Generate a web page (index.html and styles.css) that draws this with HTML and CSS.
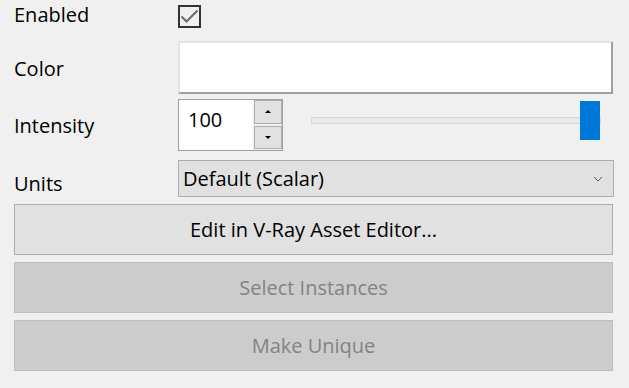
FILE: index.html
```html
<!DOCTYPE html>
<html lang="en">

<head>
  <meta charset="UTF-8">
  <title>Light Properties</title>
  <link rel="stylesheet" href="styles.css">
</head>

<body>
  <div class="panel">
    <div class="row row-enabled">
      <span class="label label-enabled">Enabled</span>
      <span class="checkbox">
        <svg width="19" height="19" viewBox="0 0 19 19">
          <polyline points="1.5,9.5 6.5,14.5 17.5,3.5" fill="none" stroke="#6e6e6e" stroke-width="2.2" />
        </svg>
      </span>
    </div>

    <div class="row row-color">
      <span class="label label-color">Color</span>
      <div class="swatch"></div>
    </div>

    <div class="row row-intensity">
      <span class="label label-intensity">Intensity</span>
      <div class="spinbox">
        <div class="spin-value">100</div>
        <div class="spin-buttons">
          <div class="spin-btn spin-up"><span class="arrow-up"></span></div>
          <div class="spin-btn spin-down"><span class="arrow-down"></span></div>
        </div>
      </div>
      <div class="slider">
        <div class="groove"></div>
        <div class="handle"></div>
      </div>
    </div>

    <div class="row row-units">
      <span class="label label-units">Units</span>
      <div class="combo">
        <span>Default (Scalar)</span>
        <svg width="10" height="6" viewBox="0 0 10 6">
          <polyline points="1,1 5,5 9,1" fill="none" stroke="#555" stroke-width="1" />
        </svg>
      </div>
    </div>

    <button class="btn">Edit in V-Ray Asset Editor...</button>
    <button class="btn" disabled>Select Instances</button>
    <button class="btn" disabled>Make Unique</button>
  </div>
</body>

</html>
```

FILE: styles.css
```css
body {
  margin: 0;
  background: #f0f0f0;
  color: #000;
  font-family: "Open Sans", "Noto Sans", sans-serif;
  font-size: 20px;
}

.panel {
  display: flex;
  flex-direction: column;
  padding: 5px 16px 0 14px;
}

.row {
  display: flex;
  align-items: center;
}

.label {
  width: 164px;
  flex: none;
  line-height: 24px;
}

.row-enabled {
  height: 23px;
}

.label-enabled {
  margin-top: -3px;
}

.row-color {
  height: 53px;
  margin-top: 13px;
}

.label-color {
  margin-top: 3px;
}

.row-intensity {
  height: 52px;
  margin-top: 5px;
  align-items: flex-start;
}

.label-intensity {
  margin-top: 15px;
}

.row-units {
  height: 37px;
  margin-top: 9px;
}

.label-units {
  margin-top: 10px;
}

.checkbox {
  width: 23px;
  height: 23px;
  box-sizing: border-box;
  border: 2px solid #333;
  display: flex;
}

.swatch {
  flex: 1;
  height: 53px;
  box-sizing: border-box;
  background: #fff;
  border-top: 2px solid #e3e3e3;
  border-left: 2px solid #e3e3e3;
  border-right: 2px solid #a0a0a0;
  border-bottom: 2px solid #a0a0a0;
}

.spinbox {
  display: flex;
  width: 105px;
  height: 52px;
  box-sizing: border-box;
  border: 1px solid #a0a0a0;
  background: #f0f0f0;
}

.spin-value {
  width: 74px;
  background: #fff;
  padding: 7px 0 0 9px;
  box-sizing: border-box;
  line-height: 26px;
}

.spin-buttons {
  display: flex;
  flex-direction: column;
  gap: 2px;
  width: 28px;
  padding: 0 0 1px 1px;
}

.spin-btn {
  flex: 1;
  background: #e1e1e1;
  border: 1px solid #adadad;
  display: flex;
  align-items: center;
  justify-content: center;
}

.arrow-up {
  border-left: 3px solid transparent;
  border-right: 3px solid transparent;
  border-bottom: 3px solid #000;
}

.arrow-down {
  border-left: 3px solid transparent;
  border-right: 3px solid transparent;
  border-top: 3px solid #000;
}

.slider {
  position: relative;
  width: 290px;
  height: 39px;
  margin: 2px 0 0 28px;
}

.groove {
  margin-top: 16px;
  height: 7px;
  box-sizing: border-box;
  background: #e7eaea;
  border: 1px solid #d6d6d6;
}

.handle {
  position: absolute;
  top: 0;
  right: 1px;
  width: 20px;
  height: 39px;
  background: #0078d7;
}

.combo {
  flex: 1;
  height: 37px;
  box-sizing: border-box;
  margin-right: -1px;
  background: #e1e1e1;
  border: 1px solid #adadad;
  display: flex;
  align-items: center;
  justify-content: space-between;
  padding: 0 10px 0 4px;
}

.btn {
  height: 51px;
  margin-top: 7px;
  font-family: inherit;
  font-size: 20px;
  color: #000;
  background: #e1e1e1;
  border: 1px solid #adadad;
  padding: 0;
}

.btn:disabled {
  color: #838383;
  background: #cccccc;
  border-color: #bfbfbf;
}
```
